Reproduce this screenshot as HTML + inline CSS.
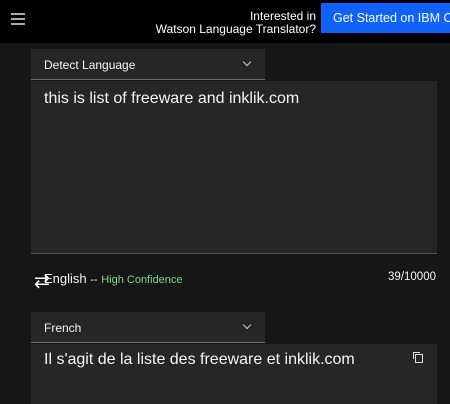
<html><head><style>
body{margin:0;width:450px;height:403px;background:#161616;overflow:hidden;font-family:"Liberation Sans",sans-serif;color:#f4f4f4;position:relative}
.a{position:absolute}
</style></head><body>
<div class="a" style="left:0;top:0;width:450px;height:43px;background:#000"></div>
<div class="a" style="left:11px;top:13px;width:14px;height:1.5px;background:#aaa;box-shadow:0 5px 0 #aaa,0 10px 0 #aaa"></div>
<div class="a" style="left:150px;top:10px;width:166px;text-align:right;font-size:12px;line-height:13px;color:#fff">Interested in<br>Watson Language Translator?</div>
<div class="a" style="left:321px;top:3px;width:117px;height:30px;background:#0f62fe;color:#fff;font-size:12.5px;line-height:30px;padding-left:12px;white-space:nowrap;overflow:hidden">Get Started on IBM Cloud</div>
<div class="a" style="left:31px;top:49px;width:234px;height:30px;background:#262626;border-bottom:1px solid #6f6f6f"></div>
<div class="a" style="left:44px;top:58px;font-size:12px">Detect Language</div>
<div class="a" style="left:244px;top:59px;width:5px;height:5px;border-right:1.2px solid #ccc;border-bottom:1.2px solid #ccc;transform:rotate(45deg)"></div>
<div class="a" style="left:31px;top:81px;width:406px;height:172px;background:#262626;border-bottom:1px solid #525252"></div>
<div class="a" style="left:44px;top:90px;font-size:16px">this is list of freeware and inklik.com</div>
<div class="a" style="left:44px;top:271px;font-size:13px">English <span style="font-size:11px">--</span> <span style="color:#6fdc8c;font-size:11px">High Confidence</span></div>
<div class="a" style="left:34px;top:275px;font-size:19px;line-height:14px;color:#fff">⇄</div>
<div class="a" style="right:14px;top:271px;font-size:11.5px">39/10000</div>
<div class="a" style="left:31px;top:312px;width:234px;height:30px;background:#262626;border-bottom:1px solid #6f6f6f"></div>
<div class="a" style="left:44px;top:321px;font-size:12px">French</div>
<div class="a" style="left:244px;top:322px;width:5px;height:5px;border-right:1.2px solid #ccc;border-bottom:1.2px solid #ccc;transform:rotate(45deg)"></div>
<div class="a" style="left:31px;top:344px;width:406px;height:60px;background:#262626"></div>
<div class="a" style="left:44px;top:351px;font-size:16px">Il s'agit de la liste des freeware et inklik.com</div>
<div class="a" style="left:415px;top:354px;width:6px;height:7px;border:1.5px solid #ddd"></div>
<div class="a" style="left:413px;top:352px;width:6px;height:6px;border-left:1.5px solid #ddd;border-top:1.5px solid #ddd"></div>
</body></html>
